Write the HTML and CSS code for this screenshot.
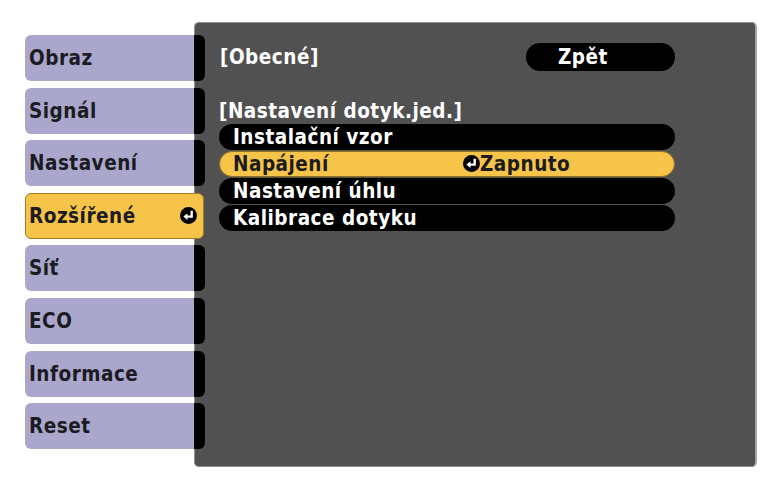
FILE: index.html
```html
<!DOCTYPE html>
<html lang="cs">
<head>
<meta charset="utf-8">
<title>Rozšířené</title>
<link rel="stylesheet" href="styles.css">
</head>
<body>
<div class="screen">
  <nav class="sidebar">
    <div class="tab">Obraz</div>
    <div class="tab">Signál</div>
    <div class="tab">Nastavení</div>
    <div class="tab tab-active">Rozšířené
      <svg class="enter enter-side" viewBox="0 0 16 16"><circle cx="8" cy="8" r="8" fill="#000"/><path d="M11 3.5V9H6.5" fill="none" stroke="#fff" stroke-width="2.2"/><path d="M3.2 9L7 5.8V12.2Z" fill="#fff"/></svg>
    </div>
    <div class="tab">Síť</div>
    <div class="tab">ECO</div>
    <div class="tab">Informace</div>
    <div class="tab">Reset</div>
  </nav>
  <main class="panel">
    <div class="panel-head">
      <span class="title">[Obecné]</span>
      <span class="back">Zpět</span>
    </div>
    <div class="section-title">[Nastavení dotyk.jed.]</div>
    <div class="rows">
      <div class="row">Instalační vzor</div>
      <div class="row row-active"><span class="label">Napájení</span><span class="value"><svg class="enter" viewBox="0 0 16 16"><circle cx="8" cy="8" r="8" fill="#000"/><path d="M11 3.5V9H6.5" fill="none" stroke="#fff" stroke-width="2.2"/><path d="M3.2 9L7 5.8V12.2Z" fill="#fff"/></svg>Zapnuto</span></div>
      <div class="row">Nastavení úhlu</div>
      <div class="row">Kalibrace dotyku</div>
    </div>
  </main>
</div>
</body>
</html>
```
FILE: styles.css
```css
html, body {
  margin: 0;
  padding: 0;
  background: #ffffff;
}
body {
  font-family: "DejaVu Sans Condensed", "DejaVu Sans", "Noto Sans", sans-serif;
  font-stretch: condensed;
  font-weight: bold;
  font-size: 20.5px;
  letter-spacing: 0.5px;
  width: 781px;
  height: 487px;
  overflow: hidden;
}
.screen {
  display: flex;
  align-items: flex-start;
  padding-left: 25px;
}
.sidebar {
  position: relative;
  z-index: 1;
  display: flex;
  flex-direction: column;
  gap: 6.6px;
  margin-top: 35px;
  width: 180px;
}
.tab {
  height: 46px;
  width: 180px;
  box-sizing: border-box;
  display: flex;
  align-items: center;
  padding-left: 4px;
  color: #1b1b22;
  border-radius: 6px;
  background: linear-gradient(to right, #aaa6cc 0, #aaa6cc 169px, #000 169px, #000 100%);
}
.tab-active {
  width: 179px;
  background: #f6c449;
  border: 1px solid #9c7d2a;
  padding-left: 3px;
  justify-content: space-between;
  padding-right: 6px;
}
.enter {
  width: 17px;
  height: 17px;
  flex: none;
}
.panel {
  margin-top: 22px;
  margin-left: -11px;
  width: 563px;
  height: 445px;
  box-sizing: border-box;
  background: #515151;
  border: 1px solid #8d8d8d;
  border-right: 2px solid #a4a4a4;
  border-radius: 5px;
  padding: 20px 80px 0 24px;
  color: #ffffff;
}
.panel-head {
  display: flex;
  align-items: center;
  justify-content: space-between;
  height: 28px;
}
.title {
  padding-left: 1px;
}
.back {
  width: 149px;
  height: 28px;
  box-sizing: border-box;
  background: #000;
  border-radius: 14px;
  display: flex;
  align-items: center;
  padding-left: 32px;
}
.section-title {
  margin-top: 28px;
  height: 24px;
  line-height: 24px;
}
.rows {
  margin-top: 1px;
  display: flex;
  flex-direction: column;
  gap: 1.5px;
}
.row {
  height: 25.5px;
  box-sizing: border-box;
  background: #000;
  border-radius: 13px;
  display: flex;
  align-items: center;
  padding-left: 14px;
  line-height: 1;
}
.row-active {
  background: #f6c449;
  border: 1px solid #8e6f22;
  padding-left: 13px;
  color: #1b1b1b;
}
.label {
  width: 230px;
}
.value {
  display: flex;
  align-items: center;
  gap: 0;
}
```
